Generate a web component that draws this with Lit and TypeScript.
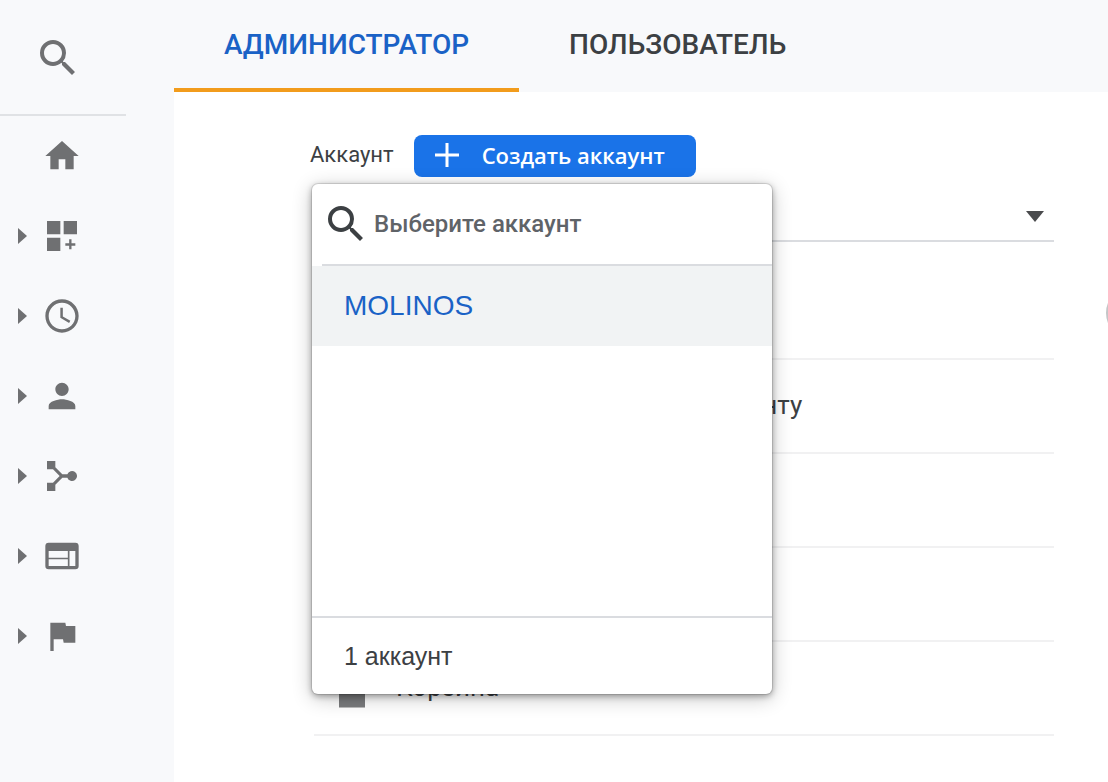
import { LitElement, html, css, svg, nothing } from "lit";
import { customElement, state } from "lit/decorators.js";

const icons = {
  home: svg`<path d="M10 20v-6h4v6h5v-8h3L12 3 2 12h3v8z"/>`,
  customize: svg`<path d="M3 3h8v8H3zM13 3h8v8h-8zM3 13h8v8H3zM16.300 14h1.400v2.400H20v1.400h-2.300V20h-1.400v-2.200H14v-1.400h2.300z"/>`,
  clock: svg`<path d="M11.99 2C6.47 2 2 6.48 2 12s4.47 10 9.99 10C17.52 22 22 17.52 22 12S17.52 2 11.99 2zM12 20c-4.42 0-8-3.58-8-8s3.58-8 8-8 8 3.58 8 8-3.58 8-8 8zm.5-13H11v6l5.25 3.15.75-1.23-4.5-2.67z"/>`,
  person: svg`<path d="M12 12c2.21 0 4-1.79 4-4s-1.79-4-4-4-4 1.79-4 4 1.79 4 4 4zm0 2c-2.67 0-8 1.34-8 4v2h16v-2c0-2.66-5.33-4-8-4z"/>`,
  split: svg`<path d="M3 3h5v3.800l4.200 4.200h3a3 3 0 1 1 0 2h-3L8 17.200V21H3v-5h3.600l4-4-4-4H3z"/>`,
  layout: svg`<path fill-rule="evenodd" d="M4 4h16a2 2 0 0 1 2 2v12a2 2 0 0 1-2 2H4a2 2 0 0 1-2-2V6a2 2 0 0 1 2-2zM4 9v4h11.500V9zM4 14v4h11.500v-4zM16.500 9v9H20V9z"/>`,
  flag: svg`<path d="M14.4 6L14 4H5v17h2v-7h5.600l.4 2h7V6z"/>`,
  search: svg`<path d="M15.500 14h-.79l-.28-.27A6.471 6.471 0 0 0 16 9.500 6.500 6.500 0 1 0 9.500 16c1.610 0 3.090-.59 4.230-1.570l.27.28v.79l5 4.990L20.490 19l-4.990-5zm-6 0C7.010 14 5 11.990 5 9.500S7.010 5 9.500 5 14 7.010 14 9.500 11.990 14 9.500 14z"/>`,
  trash: svg`<path d="M6 19c0 1.100 0 2 0 2h12V7H6zM19 4h-3.500l-1-1h-5l-1 1H5v2h14z"/>`,
};

type IconName = keyof typeof icons;

const icon = (name: IconName, cls = "icon") =>
  html`<svg class=${cls} viewBox="0 0 24 24" aria-hidden="true">${icons[name]}</svg>`;

const navItems: { icon: IconName; label: string; expandable: boolean }[] = [
  { icon: "home", label: "Главная", expandable: false },
  { icon: "customize", label: "Персонализация", expandable: true },
  { icon: "clock", label: "В режиме реального времени", expandable: true },
  { icon: "person", label: "Аудитория", expandable: true },
  { icon: "split", label: "Источники трафика", expandable: true },
  { icon: "layout", label: "Поведение", expandable: true },
  { icon: "flag", label: "Конверсии", expandable: true },
];

@customElement("side-nav")
class SideNav extends LitElement {
  static styles = css`
    :host {
      display: block;
      width: 126px;
    }
    button,
    a {
      display: flex;
      align-items: center;
      border: 0;
      padding: 0;
      background: none;
      color: #6f7072;
    }
    .search {
      width: 100%;
      height: 116px;
      box-sizing: border-box;
      padding: 2px 0 0 34px;
      border-bottom: 2px solid #e0e2e5;
    }
    .search-icon {
      width: 48px;
      height: 48px;
      fill: currentColor;
    }
    .item {
      height: 80px;
      gap: 15px;
      padding-left: 18px;
    }
    .icon {
      width: 40px;
      height: 40px;
      fill: currentColor;
    }
    .caret {
      width: 9px;
      height: 16px;
      fill: currentColor;
    }
  `;

  render() {
    return html`
      <nav>
        <button class="search" aria-label="Поиск">${icon("search", "search-icon")}</button>
        ${navItems.map(
          (item) => html`
            <a class="item" href="#" aria-label=${item.label}>
              <svg class="caret" viewBox="0 0 9 16" aria-hidden="true">
                ${item.expandable ? svg`<path d="M0 0l9 8-9 8z"/>` : nothing}
              </svg>
              ${icon(item.icon)}
            </a>
          `
        )}
      </nav>
    `;
  }
}

@customElement("account-picker")
class AccountPicker extends LitElement {
  static styles = css`
    :host {
      display: block;
      overflow: hidden;
      border-radius: 6px;
      background: #fff;
      color: #3c4043;
      font-family: "Liberation Sans", Arial, sans-serif;
    }
    .search {
      display: flex;
      align-items: center;
      gap: 4px;
      height: 80px;
      margin-left: 10px;
      border-bottom: 2px solid #dadce0;
    }
    .icon {
      flex: none;
      width: 48px;
      height: 48px;
      fill: #3c4043;
    }
    .query {
      flex: 1;
      min-width: 0;
      border: 0;
      padding: 0;
      outline: 0;
      background: none;
      color: #3c4043;
      font: 500 24px/32px Roboto, sans-serif;
    }
    .query::placeholder {
      color: #5f6368;
      opacity: 1;
    }
    .results {
      height: 350px;
    }
    .account {
      display: block;
      width: 100%;
      height: 80px;
      border: 0;
      padding: 0 32px;
      background: #f1f3f4;
      color: #1a62c6;
      font: 28px/32px "Liberation Sans", Arial, sans-serif;
      text-align: left;
    }
    .total {
      height: 76px;
      border-top: 2px solid #dadce0;
      padding: 0 32px;
      font-size: 25px;
      line-height: 76px;
    }
  `;

  render() {
    return html`
      <label class="search">
        ${icon("search")}
        <input class="query" type="text" placeholder="Выберите аккаунт" aria-label="Выберите аккаунт" />
      </label>
      <div class="results"><button class="account">MOLINOS</button></div>
      <div class="total">1 аккаунт</div>
    `;
  }
}

@customElement("app-root")
class AppRoot extends LitElement {
  @state() private tab = 0;

  private tabs = ["АДМИНИСТРАТОР", "ПОЛЬЗОВАТЕЛЬ"];

  private rows: { label?: string; icon?: IconName }[] = [
    {},
    { label: "Управление доступом к аккаунту" },
    {},
    {},
    { label: "Корзина", icon: "trash" },
  ];

  static styles = css`
    :host {
      display: grid;
      grid-template-columns: 174px minmax(0, 1fr);
      min-height: 100vh;
      background: #f8f9fb;
      color: #3c4043;
      font-family: Roboto, sans-serif;
    }
    .page {
      display: flex;
      flex-direction: column;
    }
    .tabs {
      display: flex;
      height: 92px;
    }
    .tab {
      box-sizing: border-box;
      border: 0;
      border-bottom: 4px solid transparent;
      padding: 2px 50px 0;
      background: none;
      color: #3c4043;
      font: 500 28px/32px Roboto, sans-serif;
    }
    .tab[aria-selected="true"] {
      border-bottom-color: #f29c1c;
      color: #1a62c6;
    }
    main {
      position: relative;
      flex: 1;
      overflow: hidden;
      background: #fff;
      padding: 43px 54px 44px 136px;
    }
    .bar {
      display: flex;
      align-items: center;
      gap: 20px;
    }
    .caption {
      padding-bottom: 2px;
      font-size: 22px;
      line-height: 32px;
    }
    .create {
      display: flex;
      align-items: center;
      gap: 22px;
      height: 42px;
      border: 0;
      border-radius: 8px;
      padding: 0 31px 2px 20px;
      background: #1a73e8;
      color: #fff;
      font: 600 22px/32px "Open Sans", sans-serif;
    }
    .plus {
      width: 26px;
      height: 26px;
      fill: none;
      stroke: currentColor;
      stroke-width: 3;
    }
    .field {
      position: relative;
      display: grid;
      align-items: center;
      margin: 13px 0 24px 4px;
      border-bottom: 2px solid #dadce0;
    }
    .current,
    .arrow {
      grid-area: 1 / 1;
    }
    .current {
      appearance: none;
      width: 100%;
      height: 50px;
      border: 0;
      padding: 0 40px 0 8px;
      background: none;
      color: inherit;
      font: 24px/32px Roboto, sans-serif;
    }
    .arrow {
      justify-self: end;
      width: 18px;
      height: 12px;
      margin: 4px 10px 0 0;
      fill: #4a4b4d;
      pointer-events: none;
    }
    .picker {
      position: absolute;
      z-index: 2;
      top: -6px;
      left: -2px;
      width: 460px;
      box-shadow: 0 0 0 1px rgba(0, 0, 0, 0.1), 0 2px 6px rgba(0, 0, 0, 0.34), 0 4px 20px rgba(0, 0, 0, 0.24);
    }
    .settings {
      list-style: none;
      margin: 0 0 0 4px;
      padding: 0;
    }
    .row {
      display: flex;
      align-items: center;
      gap: 18px;
      height: 92px;
      border-bottom: 2px solid #f1f1f2;
      padding-left: 12px;
    }
    .icon,
    .blank {
      flex: none;
      width: 52px;
      height: 52px;
      fill: #7a7b7d;
    }
    .link {
      padding-bottom: 2px;
      color: inherit;
      font-size: 26px;
      line-height: 32px;
      text-decoration: none;
    }
    .move {
      position: absolute;
      top: 195px;
      right: -50px;
      width: 52px;
      height: 52px;
      border: 2px solid #c4c5c7;
      border-radius: 50%;
      padding: 0;
      background: #e4e5e7;
    }
  `;

  render() {
    return html`
      <side-nav></side-nav>
      <div class="page">
        <div class="tabs" role="tablist">
          ${this.tabs.map(
            (name, i) => html`
              <button
                class="tab"
                role="tab"
                aria-selected=${i === this.tab ? "true" : "false"}
                @click=${() => (this.tab = i)}
              >
                ${name}
              </button>
            `
          )}
        </div>
        <main>
          <div class="bar">
            <label class="caption" for="account">Аккаунт</label>
            <button class="create">
              <svg class="plus" viewBox="0 0 26 26" aria-hidden="true"><path d="M13 1v24M1 13h24" /></svg>
              Создать аккаунт
            </button>
          </div>
          <div class="field">
            <select class="current" id="account">
              <option>MOLINOS</option>
            </select>
            <svg class="arrow" viewBox="0 0 18 12" aria-hidden="true"><path d="M0 0h18l-9 11z" /></svg>
            <account-picker class="picker"></account-picker>
          </div>
          <ul class="settings">
            ${this.rows.map(
              (row) => html`
                <li class="row">
                  ${row.icon ? icon(row.icon) : html`<span class="blank"></span>`}
                  ${row.label ? html`<a class="link" href="#">${row.label}</a>` : nothing}
                </li>
              `
            )}
          </ul>
          <button class="move" aria-label="Переместить"></button>
        </main>
      </div>
    `;
  }
}
